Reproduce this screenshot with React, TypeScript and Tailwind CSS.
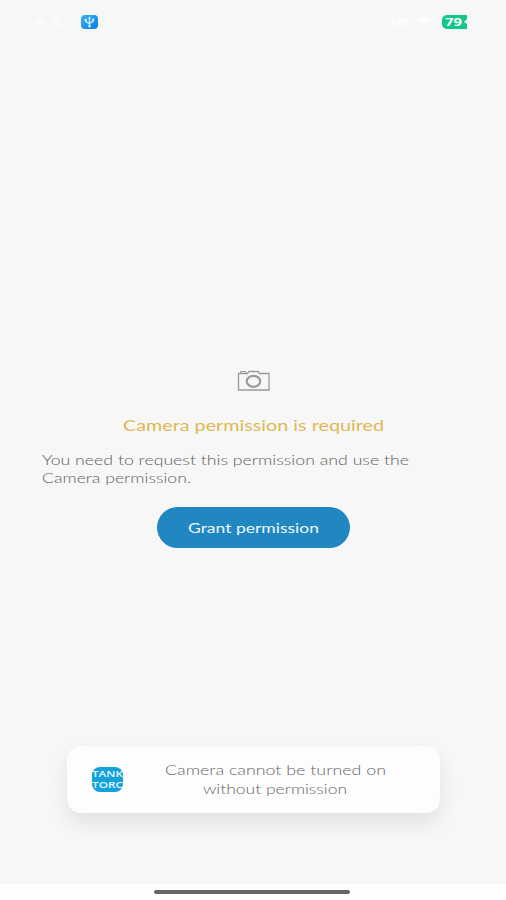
import { useLayoutEffect, useRef, useState } from "react";
import { clsx } from "clsx";

type WideTextProps = { children: string; width: number; className?: string };

// A line of text stretched horizontally to a given width.
function WideText({ children, width, className }: WideTextProps) {
  const ref = useRef<HTMLSpanElement>(null);
  const [scale, setScale] = useState(1);
  useLayoutEffect(() => {
    if (ref.current) setScale((width / ref.current.getBoundingClientRect().width) * scale);
  }, [width]);
  return (
    <span className="flex shrink-0 items-start justify-start text-left" style={{ width }}>
      <span
        ref={ref}
        className={clsx("block shrink-0 origin-left whitespace-nowrap", className)}
        style={{ transform: `scaleX(${scale})` }}
      >
        {children}
      </span>
    </span>
  );
}

function StatusBar() {
  return (
    <header className="flex h-[44px] items-center pl-[33px] pr-[39px]">
      <svg className="h-[14px] w-[40px]" viewBox="0 0 40 14" fill="#fbfbfb">
        <rect x="2" y="4" width="10" height="6" rx="2" />
        <path d="M20 3h6l-2 4 6 3v2h-8l-2-4z" />
      </svg>
      <svg className="ml-2 h-[14px] w-[17px]" viewBox="0 0 17 14">
        <defs>
          <linearGradient id="usb" x1="0" y1="0" x2="1" y2="1">
            <stop offset="0" stopColor="#38b2f2" />
            <stop offset="1" stopColor="#087ee9" />
          </linearGradient>
        </defs>
        <rect width="17" height="14" rx="4" fill="url(#usb)" />
        <path
          d="M8.5 2.2v9.5M4.8 5v1.6l3.7 2.2M12.2 4.6v1.7L8.5 8.4"
          fill="none"
          stroke="#d8f1ff"
          strokeWidth="1.3"
        />
        <path d="M6.8 3.6 8.5 1.4l1.7 2.2z" fill="#d8f1ff" />
        <circle cx="8.5" cy="11.3" r="1.2" fill="#d8f1ff" />
        <circle cx="4.8" cy="5" r="1.2" fill="#d8f1ff" />
        <circle cx="12.2" cy="4.7" r="1.2" fill="#d8f1ff" />
      </svg>
      <svg className="ml-auto mr-[6px] h-[14px] w-[48px]" viewBox="0 0 48 14" fill="#fbfbfb">
        <rect x="3" y="3" width="4" height="8" rx="1" />
        <rect x="9" y="3" width="11" height="9" rx="2" />
        <path d="M27 5q9-7 18 0l-9 7z" />
      </svg>
      <div className="flex h-[14px] w-[25px] items-center rounded-l-[5px] bg-[#10c989] pl-[3px]">
        <WideText width={17} className="font-['Open_Sans',sans-serif] text-[11px] leading-[14px] font-bold text-white">
          79
        </WideText>
        <svg className="ml-[1px] h-[8px] w-[4px] shrink-0" viewBox="0 0 4 8">
          <path d="M4 1 1 4l3 2z" fill="#e9fff7" />
        </svg>
      </div>
    </header>
  );
}

function CameraIcon() {
  return (
    <svg className="h-[22px] w-[34px]" viewBox="0 0 34 22" fill="none" stroke="#9a9a9a">
      <path d="M1.500 3.500H10.500l1.500-2h9l1.500 2h9.500v16.500H1.500z" strokeWidth="1.3" />
      <path d="M3.500 3V1.500h5V3" strokeWidth="1" />
      <ellipse cx="16.500" cy="11.300" rx="6.700" ry="5.500" strokeWidth="2.200" />
    </svg>
  );
}

function Toast() {
  return (
    <div className="mx-auto flex h-[67px] w-[373px] items-center rounded-[14px] bg-[#fdfdfd] pl-[25px] shadow-[0_10px_20px_rgba(0,0,0,0.09)]">
      <div className="flex h-[25px] w-[31px] shrink-0 flex-col items-center rounded-[8px] bg-[#14a1dc] pt-[1px] font-['Open_Sans',sans-serif] text-[8px] leading-[11px] font-semibold text-[#e4f7ff]">
        <WideText width={31}>TANK</WideText>
        <WideText width={31}>TORC</WideText>
      </div>
      <div className="ml-[42px] flex w-[221px] flex-col items-center pb-[2px] text-[14px] leading-[19px] font-light text-[#666666]">
        <WideText width={221}>Camera cannot be turned on</WideText>
        <WideText width={144}>without permission</WideText>
      </div>
    </div>
  );
}

export default function App() {
  return (
    <div className="flex h-[900px] w-[506px] flex-col overflow-hidden bg-[#f7f7f7] font-[Lato,sans-serif]">
      <StatusBar />
      <main className="flex flex-1 flex-col">
        <div className="mt-[326px] ml-[237px] h-[22px]">
          <CameraIcon />
        </div>
        <h1 className="mt-[23px] ml-[123px] text-[15.5px] leading-[20px] text-[#e0b752]">
          <WideText width={261}>Camera permission is required</WideText>
        </h1>
        <div className="mt-[16px] ml-[42px] text-[14px] leading-[17.5px] font-light text-[#606060]">
          <WideText width={367}>You need to request this permission and use the</WideText>
          <WideText width={149}>Camera permission.</WideText>
        </div>
        <button className="mt-[21px] ml-[157px] flex h-[41px] w-[193px] items-center justify-center rounded-full bg-[#2187c1] text-[13.5px] leading-[20px] text-[#edf8ff]">
          <WideText width={131}>Grant permission</WideText>
        </button>
        <div className="mt-auto mb-[71px]">
          <Toast />
        </div>
      </main>
      <footer className="flex h-[16px] justify-center bg-[#fdfdfd] pt-[6px] pr-[3px]">
        <div className="h-[4px] w-[196px] rounded-full bg-[#666666]" />
      </footer>
    </div>
  );
}
